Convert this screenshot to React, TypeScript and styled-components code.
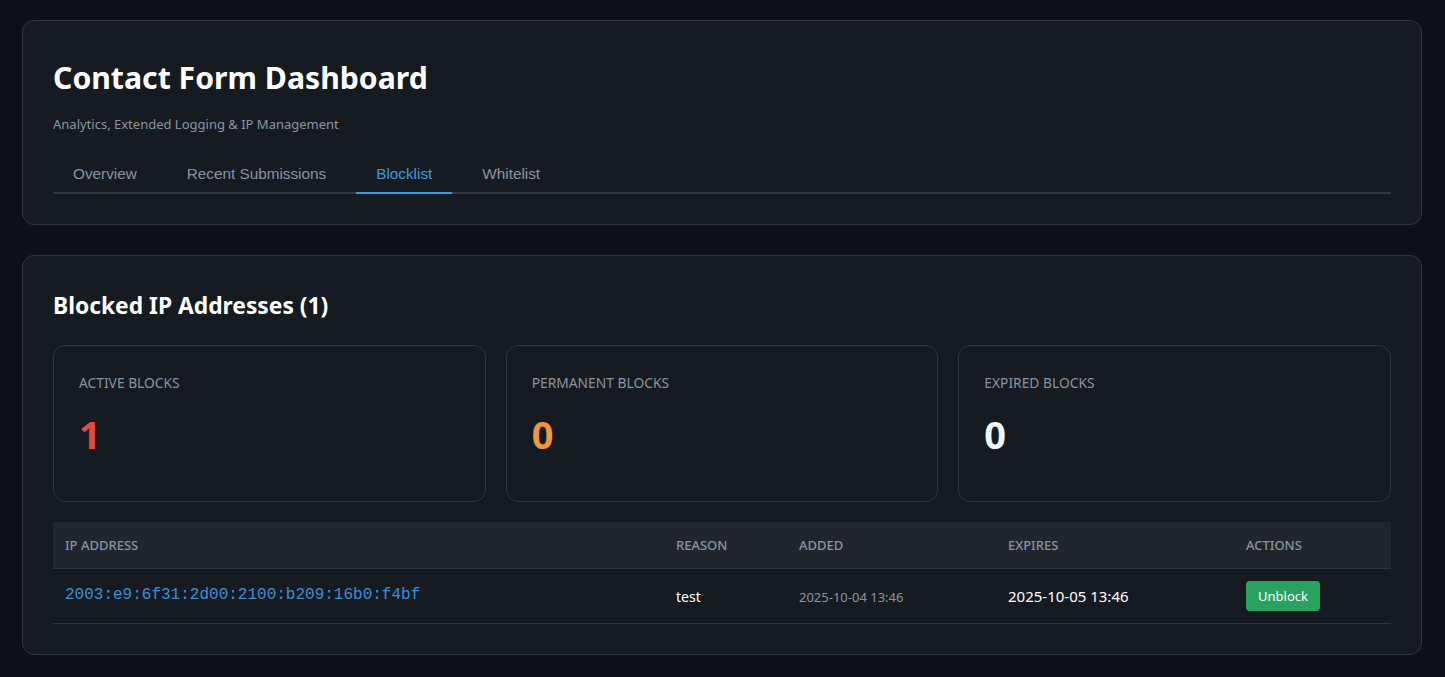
import React from "react";
import styled, { createGlobalStyle } from "styled-components";

const Global = createGlobalStyle`
  html, body { margin: 0; padding: 0; background: #0d1117; }
  body { font-family: "Noto Sans", "Open Sans", sans-serif; color: #e6edf3; }
`;

const Page = styled.div`
  padding: 20px 23px 22px 22px;
  display: flex;
  flex-direction: column;
  gap: 30px;
`;

const Card = styled.section`
  background: #161b22;
  border: 1px solid #30363d;
  border-radius: 12px;
  padding: 30px;
`;

const Title = styled.h1`
  margin: 9px 0 0;
  font-size: 30.2px;
  font-weight: 700;
  color: #ffffff;
  line-height: 1.2;
`;

const Subtitle = styled.p`
  margin: 19px 0 0;
  font-size: 13px;
  color: #8b949e;
`;

const Tabs = styled.nav`
  margin-top: 23px;
  display: flex;
  gap: 10px;
  border-bottom: 2px solid #30363d;
`;

const Tab = styled.div<{ $active?: boolean }>`
  font-family: "Liberation Sans", Arial, sans-serif;
  font-size: 15.3px;
  padding: 9px 20px 9px;
  margin-bottom: -2px;
  color: ${(p) => (p.$active ? "#3a9bd9" : "#8b949e")};
  border-bottom: 2px solid ${(p) => (p.$active ? "#3a9bd9" : "transparent")};
`;

const Heading = styled.h2`
  margin: 4px 0 0;
  font-size: 22.8px;
  font-weight: 700;
  color: #ffffff;
`;

const Stats = styled.div`
  margin-top: 24px;
  display: grid;
  grid-template-columns: repeat(3, 1fr);
  gap: 20px;
`;

const StatCard = styled.div`
  height: 157px;
  box-sizing: border-box;
  border: 1px solid #30363d;
  border-radius: 12px;
  padding: 27px 25px;
  background: #161b22;
`;

const StatLabel = styled.div`
  font-size: 13.8px;
  color: #8b949e;
  text-transform: uppercase;
`;

const StatValue = styled.div<{ $color: string }>`
  margin-top: 20px;
  font-size: 38px;
  font-weight: 700;
  line-height: 1.2;
  color: ${(p) => p.$color};
`;

const Table = styled.table`
  margin-top: 20px;
  width: 100%;
  border-collapse: collapse;
  table-layout: fixed;
`;

const Th = styled.th<{ $w?: number }>`
  background: #21262d;
  text-align: left;
  font-size: 13px;
  font-weight: 500;
  color: #8b949e;
  text-transform: uppercase;
  padding: 0 12px;
  height: 46px;
  border-bottom: 1px solid #30363d;
  width: ${(p) => (p.$w ? `${p.$w}px` : "auto")};
`;

const Td = styled.td`
  padding: 0 12px;
  height: 54px;
  border-bottom: 1px solid #30363d;
  font-size: 14px;
  color: #ffffff;
`;

const DateCell = styled(Td)`
  font-size: 15px;
`;

const IpText = styled.code`
  font-family: "Liberation Mono", "Courier New", monospace;
  font-size: 16px;
  color: #3a8fd6;
  position: relative;
  top: -2px;
`;

const Muted = styled.span`
  font-size: 13px;
  color: #8b949e;
`;

const UnblockButton = styled.button`
  font-family: "Noto Sans", sans-serif;
  background: #27a35f;
  color: #ffffff;
  border: none;
  border-radius: 4px;
  font-size: 13px;
  padding: 0 12px;
  height: 30px;
`;

export default function App() {
  return (
    <>
      <Global />
      <Page>
        <Card>
          <Title>Contact Form Dashboard</Title>
          <Subtitle>Analytics, Extended Logging &amp; IP Management</Subtitle>
          <Tabs>
            <Tab>Overview</Tab>
            <Tab>Recent Submissions</Tab>
            <Tab $active>Blocklist</Tab>
            <Tab>Whitelist</Tab>
          </Tabs>
        </Card>
        <Card>
          <Heading>Blocked IP Addresses (1)</Heading>
          <Stats>
            <StatCard>
              <StatLabel>Active Blocks</StatLabel>
              <StatValue $color="#e5483f">1</StatValue>
            </StatCard>
            <StatCard>
              <StatLabel>Permanent Blocks</StatLabel>
              <StatValue $color="#f0993a">0</StatValue>
            </StatCard>
            <StatCard>
              <StatLabel>Expired Blocks</StatLabel>
              <StatValue $color="#f0f6fc">0</StatValue>
            </StatCard>
          </Stats>
          <Table>
            <thead>
              <tr>
                <Th $w={587}>IP Address</Th>
                <Th $w={99}>Reason</Th>
                <Th $w={185}>Added</Th>
                <Th $w={214}>Expires</Th>
                <Th>Actions</Th>
              </tr>
            </thead>
            <tbody>
              <tr>
                <Td><IpText>2003:e9:6f31:2d00:2100:b209:16b0:f4bf</IpText></Td>
                <Td>test</Td>
                <Td><Muted>2025-10-04 13:46</Muted></Td>
                <DateCell>2025-10-05 13:46</DateCell>
                <Td><UnblockButton>Unblock</UnblockButton></Td>
              </tr>
            </tbody>
          </Table>
        </Card>
      </Page>
    </>
  );
}
